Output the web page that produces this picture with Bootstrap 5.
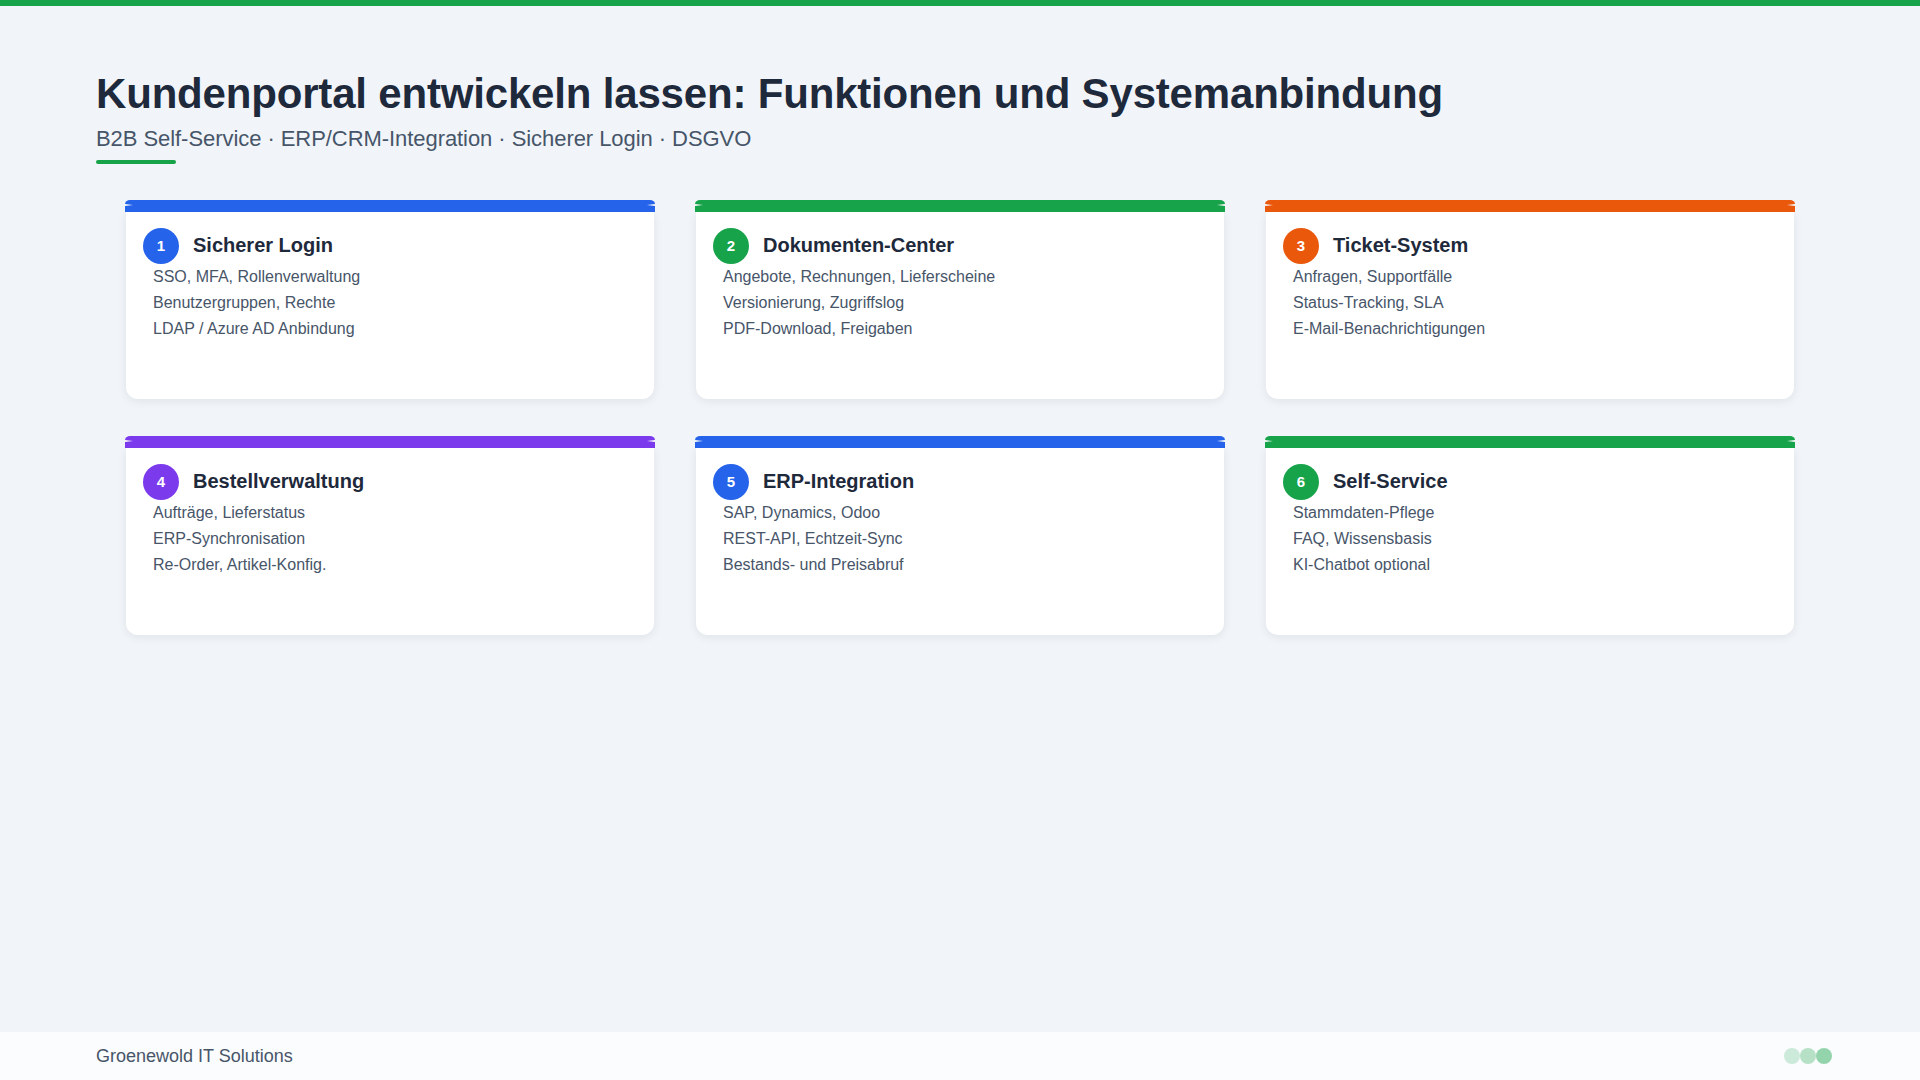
<!doctype html>
<html lang="de"><head><meta charset="utf-8">
<link href="https://cdn.jsdelivr.net/npm/bootstrap@5.3.0/dist/css/bootstrap.min.css" rel="stylesheet">
<style>
html,body{height:100%}
body{background:#f1f5f9;font-family:"Liberation Sans",Arial,sans-serif;color:#1e293b;overflow:hidden}
.page{height:1080px}
.topbar{height:6px;background:#16a34a}
.head{padding:60px 96px 0 96px}
.head h1{font-size:42px;font-weight:700;line-height:56px;margin:0;color:#1e293b;letter-spacing:-.18px}
.head p{font-size:22px;line-height:34px;margin:0;color:#475569;letter-spacing:-.06px}
.rule{width:80px;height:4px;background:#16a34a;border-radius:2px;margin-top:4px}
.grid{display:grid;grid-template-columns:repeat(3,530px);column-gap:40px;row-gap:37px;padding:36px 0 0 125px}
.tile{height:199px}
.stripe{height:12px;border-radius:5px 5px 0 0/4px 4px 0 0;background:var(--c);position:relative;z-index:1}
.stripe::before,.stripe::after{content:"";position:absolute;top:4px;width:8px;height:2px;background:#f8fafc}
.stripe::before{left:0;clip-path:polygon(0 0,100% 50%,0 100%)}
.stripe::after{right:0;clip-path:polygon(100% 0,0 50%,100% 100%)}
.tile-body{height:187px;margin:0 1px;padding:16px 17px 0 17px;background:#fff;border-radius:0 0 12px 12px;box-shadow:0 2px 10px rgba(15,23,42,.08)}
.num{width:36px;height:36px;background:var(--c);color:#fff;font-size:15px;font-weight:700;flex:none}
.tile h2{font-size:20px;font-weight:700;margin:0 0 2px 14px;color:#1e293b;line-height:32px}
.tile ul{margin:0;padding:0 0 0 10px;list-style:none;font-size:16px;line-height:26px;color:#475569}
.foot{height:48px;background:#fbfcfd;padding:0 88px 0 96px;margin-top:auto;font-size:18px;color:#475569}
.dot{width:16px;height:16px;border-radius:50%;background:#16a34a}
</style></head>
<body>
<div class="page d-flex flex-column">
<div class="topbar"></div>
<header class="head">
<h1>Kundenportal entwickeln lassen: Funktionen und Systemanbindung</h1>
<p>B2B Self-Service · ERP/CRM-Integration · Sicherer Login · DSGVO</p>
<div class="rule"></div>
</header>
<main class="grid">
<section class="tile" style="--c:#2563eb"><div class="stripe"></div><div class="tile-body"><div class="d-flex align-items-center"><div class="num rounded-circle d-flex align-items-center justify-content-center">1</div><h2>Sicherer Login</h2></div><ul><li>SSO, MFA, Rollenverwaltung</li><li>Benutzergruppen, Rechte</li><li>LDAP / Azure AD Anbindung</li></ul></div></section>
<section class="tile" style="--c:#16a34a"><div class="stripe"></div><div class="tile-body"><div class="d-flex align-items-center"><div class="num rounded-circle d-flex align-items-center justify-content-center">2</div><h2>Dokumenten-Center</h2></div><ul><li>Angebote, Rechnungen, Lieferscheine</li><li>Versionierung, Zugriffslog</li><li>PDF-Download, Freigaben</li></ul></div></section>
<section class="tile" style="--c:#ea580c"><div class="stripe"></div><div class="tile-body"><div class="d-flex align-items-center"><div class="num rounded-circle d-flex align-items-center justify-content-center">3</div><h2>Ticket-System</h2></div><ul><li>Anfragen, Supportfälle</li><li>Status-Tracking, SLA</li><li>E-Mail-Benachrichtigungen</li></ul></div></section>
<section class="tile" style="--c:#7c3aed"><div class="stripe"></div><div class="tile-body"><div class="d-flex align-items-center"><div class="num rounded-circle d-flex align-items-center justify-content-center">4</div><h2>Bestellverwaltung</h2></div><ul><li>Aufträge, Lieferstatus</li><li>ERP-Synchronisation</li><li>Re-Order, Artikel-Konfig.</li></ul></div></section>
<section class="tile" style="--c:#2563eb"><div class="stripe"></div><div class="tile-body"><div class="d-flex align-items-center"><div class="num rounded-circle d-flex align-items-center justify-content-center">5</div><h2>ERP-Integration</h2></div><ul><li>SAP, Dynamics, Odoo</li><li>REST-API, Echtzeit-Sync</li><li>Bestands- und Preisabruf</li></ul></div></section>
<section class="tile" style="--c:#16a34a"><div class="stripe"></div><div class="tile-body"><div class="d-flex align-items-center"><div class="num rounded-circle d-flex align-items-center justify-content-center">6</div><h2>Self-Service</h2></div><ul><li>Stammdaten-Pflege</li><li>FAQ, Wissensbasis</li><li>KI-Chatbot optional</li></ul></div></section>
</main>
<footer class="foot d-flex align-items-center justify-content-between">
<span>Groenewold IT Solutions</span>
<div class="d-flex"><span class="dot" style="opacity:.2"></span><span class="dot" style="opacity:.3"></span><span class="dot" style="opacity:.45"></span></div>
</footer>
</div>
<script src="https://cdn.jsdelivr.net/npm/bootstrap@5.3.0/dist/js/bootstrap.bundle.min.js"></script>
</body></html>
